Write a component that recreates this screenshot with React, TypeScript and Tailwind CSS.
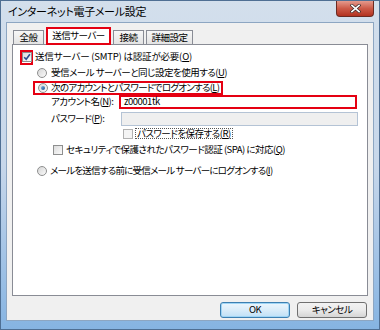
import React from 'react';

const font = "font-['Meiryo_UI','Noto_Sans_CJK_JP',sans-serif] [font-feature-settings:'palt']";

const Radio: React.FC<{ checked?: boolean }> = ({ checked }) => (
  <span className="relative inline-block w-[10px] h-[10px] rounded-full border border-[#8e8f8f] bg-gradient-to-br from-[#d6d6d6] to-[#fafafa] shrink-0">
    {checked && (
      <span className="absolute left-[2px] top-[2px] w-[4px] h-[4px] rounded-full bg-gradient-to-br from-[#7fb6e6] to-[#1c4f8c]" />
    )}
  </span>
);

const Check: React.FC<{ checked?: boolean; disabled?: boolean }> = ({ checked, disabled }) => (
  <span
    className={
      disabled
        ? 'relative inline-block w-[10px] h-[10px] border border-[#b1b1b1] bg-[#f4f4f4] shrink-0'
        : 'relative inline-block w-[10px] h-[10px] border border-[#8e8f8f] bg-gradient-to-br from-[#dcdcdc] to-[#fbfbfb] shrink-0'
    }
  >
    {checked && (
      <svg viewBox="0 0 8 8" className="absolute left-0 top-0 w-[8px] h-[8px]">
        <path d="M1.2 4.2 L3.2 6.3 L6.9 1.2" fill="none" stroke="#2a4d8f" strokeWidth="1.6" />
      </svg>
    )}
  </span>
);

const Tab: React.FC<{ label: string; w: string }> = ({ label, w }) => (
  <div
    className={`${w} h-[14px] border border-b-0 border-[#898c95] bg-gradient-to-b from-[#f7f7f7] to-[#e3e3e3] flex items-center justify-center whitespace-nowrap`}
  >
    {label}
  </div>
);

export default function App() {
  return (
    <div className={`w-[380px] h-[330px] flex flex-col bg-gradient-to-b from-[#d3dfec] via-[#c7d7ea] to-[#86b4e2] border border-[#4f6f93] ${font}`}>
      <div className="h-[21px] flex items-start justify-between shrink-0">
        <span className="pl-[7px] pt-[5px] text-[11px] tracking-[-0.3px] leading-none text-black whitespace-nowrap">インターネット電子メール設定</span>
        <div className="mr-[5px] w-[38px] h-[16px] rounded-b-[4px] border border-t-0 border-[#6b2a22] bg-gradient-to-b from-[#e49a8d] via-[#cc5a48] to-[#b2311f] flex items-center justify-center">
          <svg viewBox="0 0 12 10" className="w-[11px] h-[9px]">
            <path d="M2 1.5 L10 8.5 M10 1.5 L2 8.5" stroke="#3b2a2a" strokeWidth="3.4" strokeLinecap="square" />
            <path d="M2 1.5 L10 8.5 M10 1.5 L2 8.5" stroke="#ffffff" strokeWidth="1.8" strokeLinecap="square" />
          </svg>
        </div>
      </div>

      <div className="mx-[5px] mb-[8px] flex-1 bg-[#f0f0f0] border border-[#8da6c2] flex flex-col px-[5px] pt-[4px] text-[9.5px] tracking-[-0.5px] leading-none text-black whitespace-nowrap">
        <div className="h-[17px] flex items-end gap-[2px] pl-[1px] shrink-0">
          <Tab label="全般" w="w-[31px]" />
          <div className="relative z-10 -mb-[1px] w-[65px] h-[18px] border-2 border-[#e50012] bg-white flex items-center justify-center">
            送信サーバー
          </div>
          <Tab label="接続" w="w-[31px]" />
          <Tab label="詳細設定" w="w-[47px]" />
        </div>

        <div className="h-[252px] bg-white border border-[#898c95] flex flex-col pt-[4px] shrink-0">
          <div className="h-[16px] flex items-center">
            <span className="ml-[7px] w-[13px] h-[15px] border-2 border-[#e50012] flex items-center justify-center">
              <Check checked />
            </span>
            <span className="ml-[2px] tracking-[-0.2px]">送信サーバー (SMTP) は認証が必要(<u>O</u>)</span>
          </div>
          <div className="h-[15px] flex items-center">
            <span className="ml-[24px] flex">
              <Radio />
            </span>
            <span className="ml-[4px]">受信メール サーバーと同じ設定を使用する(<u>U</u>)</span>
          </div>
          <div className="h-[14px] mt-[1px] flex items-center">
            <div className="ml-[20px] h-[14px] border-2 border-[#e50012] flex items-center pl-[3px] pr-[2px]">
              <Radio checked />
              <span className="ml-[3px] tracking-[-0.7px]">次のアカウントとパスワードでログオンする(<u>L</u>)</span>
            </div>
          </div>
          <div className="h-[14px] flex items-center">
            <span className="ml-[38px] w-[68px]">アカウント名(<u>N</u>):</span>
            <div className="w-[238px] h-[14px] border-2 border-[#e50012] flex items-center pl-[3px]">z00001tk</div>
          </div>
          <div className="h-[15px] mt-[2px] flex items-center">
            <span className="ml-[38px] w-[70px]">パスワード(<u>P</u>):</span>
            <div className="w-[237px] h-[14px] border border-[#b4c3d5] bg-[#efefef]" />
          </div>
          <div className="h-[15px] flex items-center">
            <span className="ml-[110px] flex">
              <Check disabled />
            </span>
            <span className="ml-[2px] px-[1px] border border-dotted border-[#555]">パスワードを保存する(<u>R</u>)</span>
          </div>
          <div className="h-[15px] mt-[1px] flex items-center">
            <span className="ml-[40px] flex">
              <Check />
            </span>
            <span className="ml-[3px]">セキュリティで保護されたパスワード認証 (SPA) に対応(<u>Q</u>)</span>
          </div>
          <div className="h-[15px] mt-[6px] flex items-center">
            <span className="ml-[24px] flex">
              <Radio />
            </span>
            <span className="ml-[3px] tracking-[-0.75px]">メールを送信する前に受信メール サーバーにログオンする(<u>I</u>)</span>
          </div>
        </div>

        <div className="flex justify-end gap-[7px] mt-[6px] pr-[1px]">
          <button className="w-[70px] h-[16px] rounded-[3px] border border-[#3c7fb1] bg-gradient-to-b from-[#ecf6fd] via-[#d9ecf9] to-[#bfe0f6] shadow-[inset_0_0_0_1px_#9fd5f5] leading-none">
            OK
          </button>
          <button className="w-[70px] h-[16px] rounded-[3px] border border-[#707070] bg-gradient-to-b from-[#f2f2f2] via-[#ebebeb] to-[#d5d5d5] leading-none">
            キャンセル
          </button>
        </div>
      </div>
    </div>
  );
}
